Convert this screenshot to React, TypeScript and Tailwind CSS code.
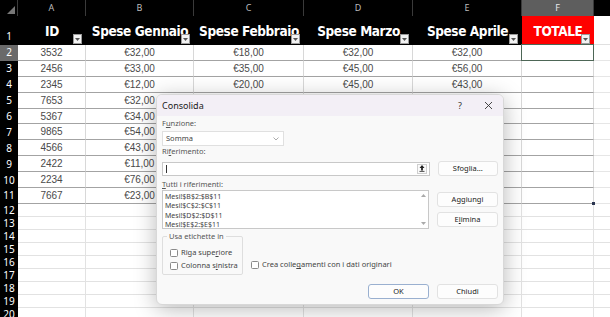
import React from "react";

const COLS = [
  { key: "A", w: 68, title: "ID" },
  { key: "B", w: 108, title: "Spese Gennaio" },
  { key: "C", w: 110, title: "Spese Febbraio" },
  { key: "D", w: 109, title: "Spese Marzo" },
  { key: "E", w: 109, title: "Spese Aprile" },
  { key: "F", w: 72, title: "TOTALE" },
];

const ROWS: string[][] = [
  ["3532", "€32,00", "€18,00", "€32,00", "€32,00"],
  ["2456", "€33,00", "€35,00", "€45,00", "€56,00"],
  ["2345", "€12,00", "€20,00", "€45,00", "€43,00"],
  ["7653", "€32,00", "", "", ""],
  ["5367", "€34,00", "", "", ""],
  ["9865", "€54,00", "", "", ""],
  ["4566", "€43,00", "", "", ""],
  ["2422", "€11,00", "", "", ""],
  ["2234", "€76,00", "", "", ""],
  ["7667", "€23,00", "", "", ""],
];

const REFS = ["Mesi!$B$2:$B$11", "Mesi!$C$2:$C$11", "Mesi!$D$2:$D$11", "Mesi!$E$2:$E$11"];

function FilterButton() {
  return (
    <span className="absolute right-[4px] bottom-[1px] flex h-[10px] w-[9px] items-center justify-center border border-[#9a9a9a] bg-[#f2f2f2]">
      <svg width="5" height="3" viewBox="0 0 5 3">
        <path d="M0 0h5L2.5 3z" fill="#555" />
      </svg>
    </span>
  );
}

function Checkbox({ label }: { label: React.ReactNode }) {
  return (
    <div className="flex h-[10px] items-center gap-[3px]">
      <span className="h-[8px] w-[8px] rounded-[1.5px] border border-[#8a8a8a] bg-white" />
      <span>{label}</span>
    </div>
  );
}

function DlgButton({ children, primary }: { children: React.ReactNode; primary?: boolean }) {
  return (
    <div
      className={`flex h-[15px] w-[61px] items-center justify-center rounded-[3px] border bg-[#fdfdfd] text-[7.5px] text-[#222] ${
        primary ? "border-[#9ab0d0]" : "border-[#e2e2e2]"
      }`}
    >
      {children}
    </div>
  );
}

function Dialog() {
  return (
    <div className="absolute left-[156px] top-[94px] flex h-[211px] w-[348px] flex-col overflow-hidden rounded-[6px] border border-[#d8d8d8] bg-[#f9f9f9] text-[7.5px] text-[#333] shadow-[0_4px_22px_rgba(0,0,0,0.28)] [font-family:'Noto_Sans',sans-serif]">
      <div className="flex h-[21px] shrink-0 items-center justify-between bg-[#f3eff6] pl-[5px] pr-[10px]">
        <span className="text-[9px] text-[#1a1a1a]">Consolida</span>
        <div className="flex items-center gap-[22px] text-[#333]">
          <span className="text-[9px]">?</span>
          <svg width="9" height="9" viewBox="0 0 9 9">
            <path d="M1 1l7 7M8 1l-7 7" stroke="#333" strokeWidth="0.9" />
          </svg>
        </div>
      </div>

      <div className="flex flex-col px-[5px]">
        <div className="mt-[2px] h-[10px] leading-[10px] text-[#555]">
          F<span className="underline">u</span>nzione:
        </div>
        <div className="mt-[3px] flex h-[15px] w-[122px] items-center justify-between border border-[#e0e0e0] bg-white pl-[3px] pr-[4px]">
          <span className="text-[#444]">Somma</span>
          <svg width="6" height="4" viewBox="0 0 6 4">
            <path d="M0.5 0.5L3 3l2.5-2.5" fill="none" stroke="#888" strokeWidth="0.7" />
          </svg>
        </div>

        <div className="h-[10px] leading-[10px] text-[#555]">
          Ri<span className="underline">f</span>erimento:
        </div>
        <div className="mt-[5px] flex items-center gap-[8px]">
          <div className="flex h-[14px] w-[270px] items-center justify-between border border-[#c8c8c8] bg-white pl-[3px] pr-[2px]">
            <span className="h-[8px] w-px bg-[#333]" />
            <span className="flex h-[10px] w-[10px] items-center justify-center border border-[#cfcfcf] bg-[#fafafa]">
              <svg width="6" height="7" viewBox="0 0 6 7">
                <path d="M3 0L0.5 3h1.6v2.4h1.8V3h1.6z" fill="#222" />
                <path d="M0.5 6.4h5" stroke="#222" strokeWidth="0.8" />
              </svg>
            </span>
          </div>
          <DlgButton>Sfoglia...</DlgButton>
        </div>

        <div className="mt-[3px] h-[10px] leading-[10px] text-[#555]">
          <span className="underline">T</span>utti i riferimenti:
        </div>
        <div className="mt-px flex gap-[8px]">
          <div className="flex h-[39px] w-[270px] justify-between border border-[#c8c8c8] bg-white pl-[2px]">
            <div className="flex flex-col pt-px text-[7px] leading-[9.4px] text-[#444]">
              {REFS.map((r) => (
                <span key={r}>{r}</span>
              ))}
            </div>
            <div className="flex w-[10px] flex-col items-center justify-between py-[3px]">
              <svg width="5" height="3" viewBox="0 0 5 3">
                <path d="M0 3h5L2.5 0z" fill="#aaa" />
              </svg>
              <svg width="5" height="3" viewBox="0 0 5 3">
                <path d="M0 0h5L2.5 3z" fill="#aaa" />
              </svg>
            </div>
          </div>
          <div className="flex flex-col gap-[5px] pt-[2px]">
            <DlgButton>Aggiungi</DlgButton>
            <DlgButton>
              E<span className="underline">l</span>imina
            </DlgButton>
          </div>
        </div>

        <div className="mt-[3px] flex items-end gap-[8px]">
          <fieldset className="h-[43px] w-[81px] rounded-[2px] border border-[#dedede] pl-[7px]">
            <legend className="ml-[-3px] px-[2px] leading-[9px] text-[#555]">Usa etichette in</legend>
            <div className="mt-[7px] flex flex-col gap-[3px] text-[#444]">
              <Checkbox
                label={
                  <>
                    Riga supe<span className="underline">r</span>iore
                  </>
                }
              />
              <Checkbox
                label={
                  <>
                    Colonna s<span className="underline">i</span>nistra
                  </>
                }
              />
            </div>
          </fieldset>
          <div className="pb-[5px] text-[#444]">
            <Checkbox
              label={
                <>
                  Crea colle<span className="underline">g</span>amenti con i dati originari
                </>
              }
            />
          </div>
        </div>

        <div className="mt-[9px] flex justify-end gap-[8px]">
          <DlgButton primary>OK</DlgButton>
          <DlgButton>Chiudi</DlgButton>
        </div>
      </div>
    </div>
  );
}

export default function App() {
  return (
    <div className="relative h-[317px] w-[610px] overflow-hidden bg-white [font-family:'Noto_Sans',sans-serif]">
      {/* column letters */}
      <div className="flex h-[16px] bg-black">
        <div className="relative w-[18px] shrink-0 border-r border-[#3a3a3a]">
          <svg className="absolute bottom-[2px] right-[2px]" width="8" height="8" viewBox="0 0 8 8">
            <path d="M8 0v8H0z" fill="#777" />
          </svg>
        </div>
        {COLS.map((c) => (
          <div
            key={c.key}
            style={{ width: c.w }}
            className={`flex shrink-0 items-center justify-center border-r border-[#3a3a3a] text-[9px] ${
              c.key === "F" ? "bg-[#5e5e5e] text-[#e8e8e8]" : "text-[#bdbdbd]"
            }`}
          >
            {c.key}
          </div>
        ))}
        <div className="flex-1" />
      </div>

      {/* header row 1 */}
      <div className="flex h-[29px]">
        <div className="flex w-[18px] shrink-0 items-end justify-center bg-black pb-[1px] text-[10px] text-white">1</div>
        {COLS.map((c) => (
          <div
            key={c.key}
            style={{ width: c.w }}
            className={`relative flex shrink-0 items-center justify-center whitespace-nowrap pt-[2px] text-[13.5px] font-bold tracking-[-0.4px] text-white [font-family:'Liberation_Sans_Narrow','DejaVu_Sans_Condensed','Roboto',sans-serif] ${
              c.key === "F" ? "bg-[#ff0000]" : "bg-black"
            }`}
          >
            <span className="relative z-0">{c.title}</span>
            <FilterButton />
          </div>
        ))}
        <div className="flex-1 border-b border-[#e0e0e0]" />
      </div>

      {/* data rows */}
      {ROWS.map((r, i) => (
        <div key={i} className="flex h-[15.9px]">
          <div
            className={`flex w-[18px] shrink-0 items-center justify-center text-[10px] text-white ${
              i === 0 ? "bg-[#6a6a6a]" : "bg-black"
            }`}
          >
            {i + 2}
          </div>
          {COLS.map((c, j) => (
            <div
              key={c.key}
              style={{ width: c.w }}
              className={`relative flex shrink-0 items-center justify-center border-b border-r border-b-[#a3a3a3] border-r-[#d8d8d8] text-[10px] text-[#4a4a4a] [font-family:'Liberation_Sans',sans-serif] ${
                c.key === "F" ? "border-r-[#8a8a8a]" : ""
              }`}
            >
              {j < 5 ? r[j] : ""}
              {c.key === "F" && i === 0 && (
                <span className="absolute inset-[-1px] border-[1.5px] border-[#4d6656]" />
              )}
              {c.key === "F" && i === 9 && (
                <span className="absolute bottom-[-2px] right-[-2px] h-[3px] w-[3px] bg-[#2a3550]" />
              )}
            </div>
          ))}
          <div className="flex-1 border-b border-[#e6e6e6]" />
        </div>
      ))}

      {/* empty rows */}
      {[12, 13, 14, 15, 16, 17, 18, 19, 20].map((n) => (
        <div key={n} className="flex h-[13px]">
          <div className="flex w-[18px] shrink-0 items-center justify-center bg-black text-[10px] text-white">{n}</div>
          {COLS.map((c) => (
            <div
              key={c.key}
              style={{ width: c.w }}
              className="shrink-0 border-b border-r border-[#e2e2e2]"
            />
          ))}
          <div className="flex-1 border-b border-[#e2e2e2]" />
        </div>
      ))}

      <Dialog />
    </div>
  );
}
